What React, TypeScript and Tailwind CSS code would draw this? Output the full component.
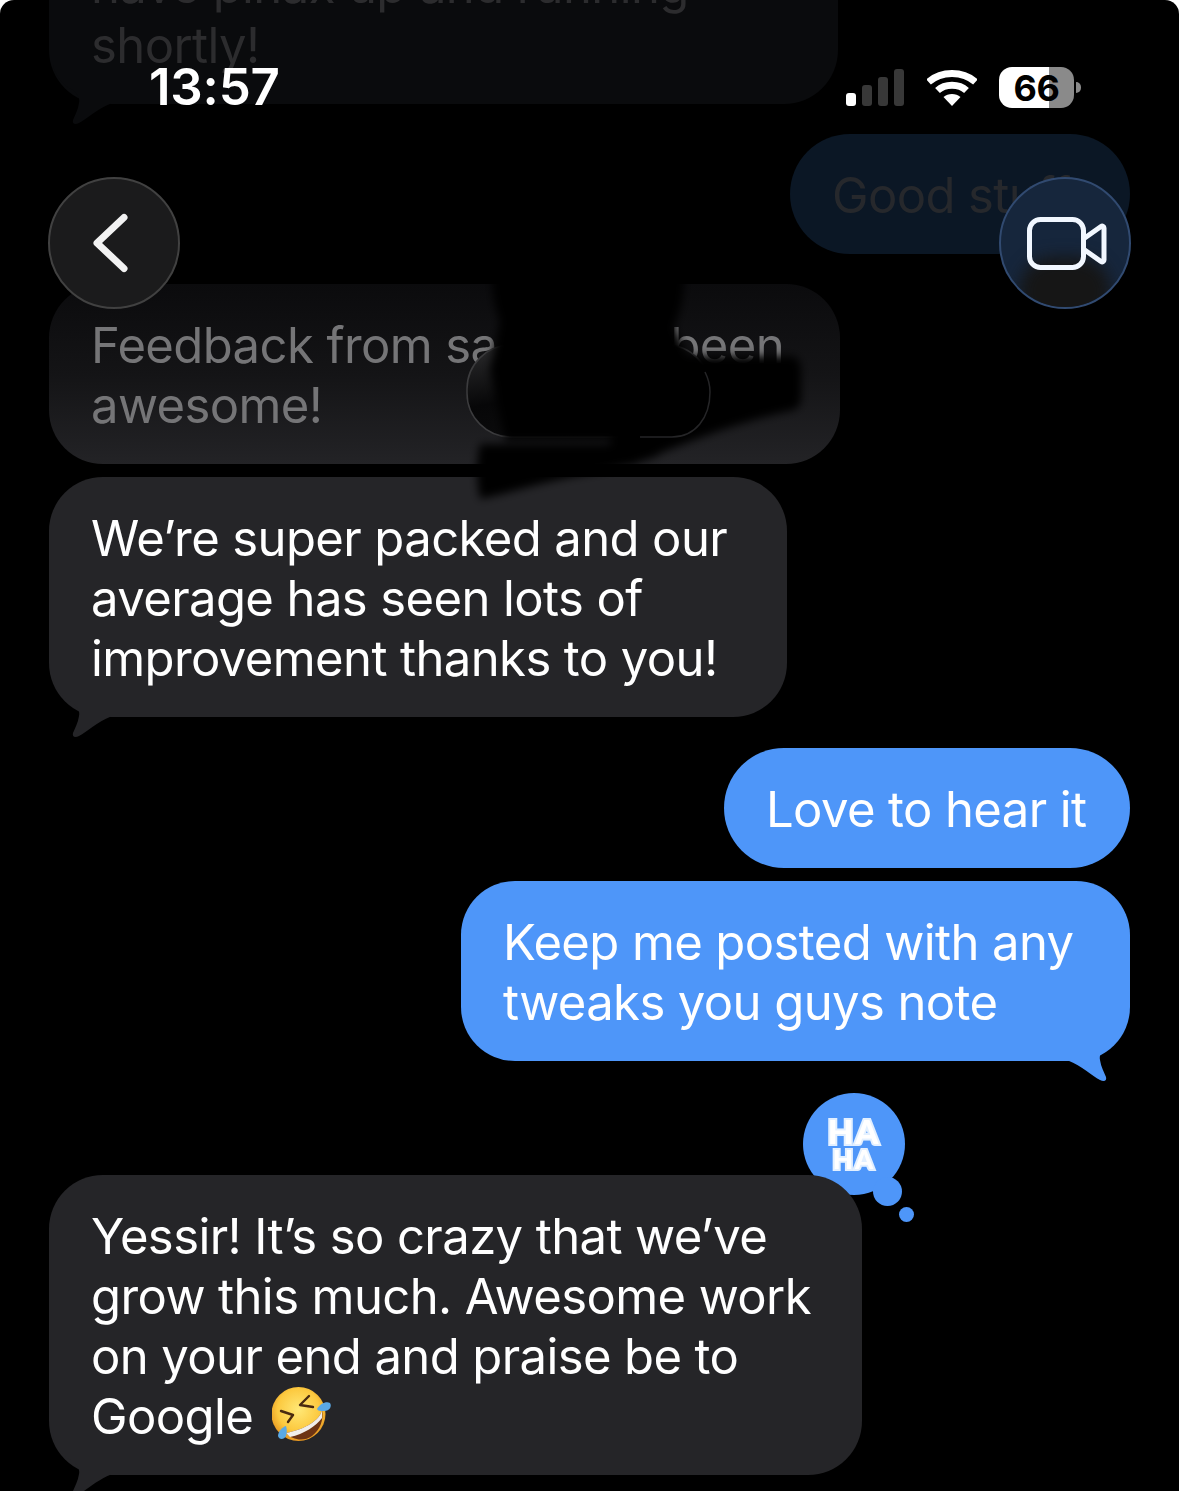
import type { ReactNode } from "react";

interface BubbleProps {
  className: string;
  tailFill?: string;
  side?: "left" | "right";
  children: ReactNode;
}

function Tail({ fill, side }: { fill: string; side: "left" | "right" }) {
  return (
    <svg
      viewBox="0 0 70 60"
      className={
        side === "left"
          ? "absolute bottom-[-21px] left-0 h-[60px] w-[70px]"
          : "absolute bottom-[-21px] right-0 h-[60px] w-[70px] -scale-x-100"
      }
    >
      <path
        d="M4 0C6 10 13 20 24 25C29 29 31 34 30 38C29 45 26 50 24 55C23 59 26 60 30 58C38 54 48 44 62 38.500L62 0Z"
        fill={fill}
      />
    </svg>
  );
}

function Bubble({ className, tailFill, side = "left", children }: BubbleProps) {
  return (
    <div
      className={`relative pb-[28px] pl-[42px] pt-[32px] text-[49px] leading-[60px] tracking-[-0.6px] ${className}`}
    >
      {tailFill && <Tail fill={tailFill} side={side} />}
      <div className="relative whitespace-nowrap">{children}</div>
    </div>
  );
}

function StatusBar() {
  return (
    <div className="absolute left-0 top-0 h-[120px] w-full">
      <div className="absolute left-[149px] top-[57px] text-[51px] font-semibold leading-[60px] tracking-[-0.2px] text-white">
        13:57
      </div>
      <div className="absolute left-[846px] top-[69px] flex h-[37px] items-end gap-[6px]">
        <div className="h-[13px] w-[10px] rounded-[3px] bg-white" />
        <div className="h-[21px] w-[10px] rounded-[3px] bg-[#383838]" />
        <div className="h-[29px] w-[10px] rounded-[3px] bg-[#383838]" />
        <div className="h-[37px] w-[10px] rounded-[3px] bg-[#383838]" />
      </div>
      <svg
        viewBox="0 0 50 37"
        className="absolute left-[927px] top-[69px] h-[37px] w-[50px]"
      >
        <path
          d="M1.500 13C14 1.500 36 1.500 48.500 13"
          fill="none"
          stroke="#fff"
          strokeWidth="7"
        />
        <path
          d="M10.500 21.500C18 14.500 32 14.500 39.500 21.500"
          fill="none"
          stroke="#fff"
          strokeWidth="7"
        />
        <path d="M16.500 28C21 24 29 24 33.500 28L25 37Z" fill="#fff" />
      </svg>
      <div className="absolute left-[999px] top-[67px] flex h-[41px] w-[75px] items-center justify-center overflow-hidden rounded-[13px] bg-[linear-gradient(90deg,#ffffff_0,#ffffff_50px,#8a8a8a_50px,#8a8a8a_100%)] text-[36px] font-bold tracking-[-0.5px] text-black">
        66
      </div>
      <div className="absolute left-[1076px] top-[82px] h-[11px] w-[5px] rounded-r-full bg-[#8a8a8a]" />
    </div>
  );
}

function NavButtons() {
  return (
    <>
      <div className="absolute left-[48px] top-[177px] flex h-[132px] w-[132px] items-center justify-center rounded-full border-2 border-[#414141] bg-[#1b1b1c]">
        <svg viewBox="0 0 44 64" className="h-[64px] w-[44px]">
          <path
            d="M32 6.500L5 32L32 57.500"
            fill="none"
            stroke="#f2f2f2"
            strokeWidth="7"
            strokeLinecap="round"
            strokeLinejoin="round"
          />
        </svg>
      </div>
      <div className="absolute left-[999px] top-[177px] flex h-[132px] w-[132px] items-center justify-center overflow-hidden rounded-full border-2 border-[#314a70] bg-[#16263c]">
        <div className="absolute bottom-[-18px] left-[18px] h-[68px] w-[92px] rounded-full bg-[#161616] blur-[8px]" />
        <svg
          viewBox="0 0 80 56"
          className="relative ml-[4px] mt-[3px] h-[56px] w-[80px]"
        >
          <rect
            x="2.500"
            y="2.500"
            width="54"
            height="48"
            rx="11"
            fill="none"
            stroke="#f1f7ff"
            strokeWidth="5"
          />
          <path
            d="M57 21.500L74 9.500C75.500 8.500 77 9.500 77 11V43C77 44.500 75.500 45.500 74 44.500L57 32.500"
            fill="none"
            stroke="#f1f7ff"
            strokeWidth="5"
            strokeLinejoin="round"
          />
        </svg>
      </div>
    </>
  );
}

// scribbled-out contact photo, coordinates are page pixels
function Redaction() {
  return (
    <svg
      viewBox="460 170 360 340"
      className="absolute left-[460px] top-[170px] h-[340px] w-[360px]"
    >
      <defs>
        <filter id="soft" x="-20%" y="-20%" width="140%" height="140%">
          <feGaussianBlur stdDeviation="4" />
        </filter>
        <linearGradient id="lens" x1="0" y1="0" x2="0.5" y2="1">
          <stop offset="0%" stopColor="#2c2c2e" />
          <stop offset="55%" stopColor="#070708" />
          <stop offset="100%" stopColor="#0c0c0d" />
        </linearGradient>
      </defs>
      <rect
        x="467"
        y="345"
        width="243"
        height="92"
        rx="44"
        fill="url(#lens)"
        stroke="#3c3c3e"
        strokeWidth="1.500"
      />
      <g fill="#000" filter="url(#soft)">
        <ellipse cx="588" cy="280" rx="96" ry="104" />
        <path d="M500 320H670L690 360L660 440H505L490 370Z" />
        <path d="M680 356H790C798 356 801 362 801 372V398C801 406 796 410 788 411C730 424 680 445 630 466L600 455Z" />
        <path d="M480 444H610L660 455C620 470 580 474 540 484C520 489 500 495 480 499C476 480 476 460 480 444Z" />
      </g>
      <path
        d="M640 437H672C695 437 710 418 710 392C710 384 708 378 705 372"
        fill="none"
        stroke="#252527"
        strokeWidth="1.500"
      />
    </svg>
  );
}

function HahaReaction() {
  return (
    <div className="absolute left-[754px] top-[-82px] h-[130px] w-[115px]">
      <div className="flex h-[102px] w-[102px] flex-col items-center justify-center rounded-full bg-[#4e96f9] pb-[2px] font-['Lato',sans-serif] font-black text-white tracking-[2px] [-webkit-text-stroke:4px_#e3f0ff] [paint-order:stroke_fill]">
        <span className="text-[33px] leading-[32px] blur-[0.5px]">HA</span>
        <span className="text-[26px] leading-[25px] blur-[0.5px]">HA</span>
      </div>
      <div className="absolute left-[70px] top-[84px] h-[29px] w-[29px] rounded-full bg-[#4e96f9]" />
      <div className="absolute left-[96px] top-[114px] h-[15px] w-[15px] rounded-full bg-[#4e96f9]" />
    </div>
  );
}

function LaughEmoji() {
  return (
    <svg
      viewBox="12 10 62 62"
      className="-my-[8px] ml-[19px] inline-block h-[62px] w-[62px] align-[-4px]"
    >
      <defs>
        <radialGradient id="face" cx="50%" cy="42%" r="60%">
          <stop offset="0%" stopColor="#ffe877" />
          <stop offset="65%" stopColor="#fcc93f" />
          <stop offset="100%" stopColor="#e4901c" />
        </radialGradient>
      </defs>
      <circle cx="38.500" cy="40" r="27" fill="url(#face)" />
      <path
        d="M62 36C60 46 46 55 26 59C32 66 44 68 52 62C60 56 64 46 62 36Z"
        fill="#6d3413"
      />
      <path
        d="M62 36C60 46 46 55 26 59L30 63C44 60 56 52 62 44Z"
        fill="#f1eeea"
      />
      <path
        d="M21 37L33 41L28 48M49 22L40 31L53 33"
        fill="none"
        stroke="#4a2a10"
        strokeWidth="2.400"
        strokeLinecap="round"
        strokeLinejoin="round"
      />
      <path
        d="M57 35C60 30 66 27 70 29C72 32 70 37 64 37C60 37 58 37 57 35Z"
        fill="#5aa9e6"
      />
      <path
        d="M26 52C22 53 18 58 18 62C19 66 24 66 26 62C27 59 27 55 26 52Z"
        fill="#5aa9e6"
      />
    </svg>
  );
}

export default function App() {
  return (
    <div className="h-[1491px] w-[1179px] bg-white font-['Inter',sans-serif]">
      <div className="relative h-full w-full overflow-hidden rounded-t-[14px] bg-black">
        <div className="flex flex-col items-start px-[49px] pt-0">
          <Bubble
            className="-mt-[76px] h-[180px] w-[789px] rounded-[54px] bg-[#0a0b0d] text-[#2c2c2e]"
            tailFill="#0a0b0d"
          >
            have pinax up and running
            <br />
            shortly!
          </Bubble>
          <Bubble className="mt-[30px] h-[120px] w-[340px] self-end rounded-[60px] bg-[#0b1725] text-[#26282c]">
            Good stuff
          </Bubble>
          <Bubble className="mt-[30px] h-[180px] w-[791px] rounded-[54px] bg-[linear-gradient(180deg,#0b0b0d_0%,#141416_50%,#232326_100%)] text-[#757577]">
            Feedback from sa
            <span className="inline-block w-[173px]" />
            been
            <br />
            awesome!
          </Bubble>
          <Bubble
            className="mt-[13px] h-[240px] w-[738px] rounded-[54px] bg-[#252528] text-white"
            tailFill="#252528"
          >
            We’re super packed and our
            <br />
            average has seen lots of
            <br />
            improvement thanks to you!
          </Bubble>
          <Bubble className="mt-[31px] h-[120px] w-[406px] self-end rounded-[60px] bg-[#4e96f9] text-white">
            Love to hear it
          </Bubble>
          <Bubble
            className="mt-[13px] h-[180px] w-[669px] self-end rounded-[54px] bg-[#4e96f9] text-white"
            tailFill="#4e96f9"
            side="right"
          >
            Keep me posted with any
            <br />
            tweaks you guys note
          </Bubble>
          <div className="relative mt-[114px]">
            <HahaReaction />
            <Bubble
              className="h-[300px] w-[813px] rounded-[54px] bg-[#252528] text-white"
              tailFill="#252528"
            >
              Yessir! It’s so crazy that we’ve
              <br />
              grow this much. Awesome work
              <br />
              on your end and praise be to
              <br />
              Google
              <LaughEmoji />
            </Bubble>
          </div>
        </div>
        <Redaction />
        <NavButtons />
        <StatusBar />
      </div>
    </div>
  );
}
